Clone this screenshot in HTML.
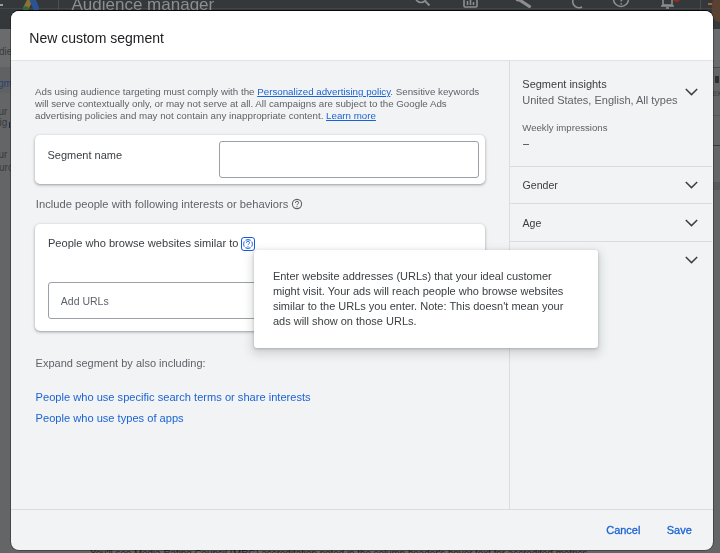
<!DOCTYPE html>
<html><head><meta charset="utf-8">
<style>
*{margin:0;padding:0;box-sizing:border-box}
html,body{width:720px;height:553px;overflow:hidden}
body{position:relative;background:#646566;font-family:"Liberation Sans",sans-serif;color:#3c4043}
.a{position:absolute;white-space:nowrap}
#dlg,#topbar{will-change:transform}
#topbar{left:0;top:0;width:720px;height:29px;background:#34383a}
#dlg{left:10px;top:10px;width:704px;height:541px}
#box{left:0.5px;top:0.5px;width:702px;height:539.5px;background:#f1f3f4;border-radius:8px;overflow:hidden;box-shadow:0 0 0 1px rgba(0,0,0,.3),0 -1px 0 rgba(0,0,0,.8)}
#cnt{left:0.5px;top:0;width:702px;height:541px}
#hdr{left:0;top:0;width:100%;height:50.5px;background:#fff;border-bottom:1px solid #e1e2e4}
.t11{font-size:11px;line-height:12px}
.t10{font-size:10px;line-height:12px}
.sec{color:#5f6368}
.card{background:#fff;border-radius:5px;box-shadow:0 1px 2px rgba(60,64,67,.3),0 1px 3px 1px rgba(60,64,67,.15)}
.inp{border:1px solid #9aa0a6;border-radius:3px;background:#fff}
.lnk{color:#1b63d5}
.med{-webkit-text-stroke:0.3px #1b63d5}
.ul{text-decoration:underline}
.div{background:#dadce0}
</style></head><body>
<div class="a" id="topbar"></div>
<div class="a" style="left:0;top:8px;width:720px;height:1px;background:#424649"></div>
<div class="a" style="left:0;top:4px;width:3px;height:1.5px;background:#9a9b9c"></div>
<svg class="a" style="left:20px;top:-8px" width="24" height="20" viewBox="0 0 24 20"><path d="M6 16 L12 4" stroke="#8a7134" stroke-width="5.5" stroke-linecap="round"/><path d="M10.5 3 L16 16" stroke="#2b5492" stroke-width="6" stroke-linecap="round"/><circle cx="5.8" cy="17" r="2.8" fill="#2a6a3c"/></svg>
<div class="a" style="left:57.5px;top:0;width:1px;height:10px;background:#4d5053"></div>
<div class="a" style="left:71.5px;top:-5px;font-size:17px;line-height:19px;color:#8c8e90">Audience manager</div>
<svg class="a" style="left:405px;top:0" width="300" height="10" viewBox="0 0 300 10" fill="none" stroke="#8c8e90" stroke-width="1.6">
 <circle cx="16" cy="-3" r="5.5"/><path d="M20 1 L24.5 5.5" stroke-width="1.8"/>
 <rect x="59" y="-6" width="13" height="13" rx="1"/><path d="M62.5 1 V5 M65.5 -2 V5 M68.5 2 V5"/>
 <path d="M113 -1 L124.5 6.5" stroke-width="3.2" stroke-linecap="round"/><circle cx="113" cy="-1" r="2.5" fill="#8c8e90" stroke="none"/>
 <path d="M171 -4 A6 6 0 0 0 177 7"/>
 <circle cx="216" cy="-1" r="7.5"/><path d="M218.5 -3 Q218.5 -1 216.2 0.3 V1.5" stroke-width="1.5"/><circle cx="216.2" cy="3.8" r="0.9" fill="#8c8e90" stroke="none"/>
 <path d="M258 -2 V5 H267 V-2 M256 6 H269"/><path d="M261 8 H264"/>
</svg>
<div class="a" style="left:673px;top:-1px;width:7px;height:3px;background:#8e2b22;border-radius:0 0 3px 3px"></div>
<div class="a" style="left:699.5px;top:0;width:1px;height:10px;background:#4d5053"></div>
<div class="a" style="left:708px;top:3px;width:4px;height:1.5px;background:#a06a30"></div>
<div class="a" style="left:712px;top:-4px;width:16px;height:26px;border-radius:8px;background:#5a4232"></div>
<!-- left strip -->
<div class="a" style="left:0;top:29px;width:12px;height:37.5px;background:#6a6b6c"></div>
<div class="a" style="left:-1px;top:45.6px;font-size:10px;line-height:12px;color:#3a3b3c">die</div>
<div class="a" style="left:0;top:66.5px;width:12px;height:26px;background:#5f6163"></div>
<div class="a" style="left:-2px;top:78.2px;font-size:10px;line-height:12px;color:#2d4270">gm</div>
<div class="a" style="left:-1.5px;top:106.3px;font-size:10px;line-height:12px;color:#3a3b3c">ur</div>
<div class="a" style="left:-0.5px;top:117px;font-size:10px;line-height:12px;color:#3a3b3c">ig</div>
<div class="a" style="left:9px;top:122px;width:1.2px;height:6px;background:#1e2a44"></div>
<div class="a" style="left:-1.5px;top:149.1px;font-size:10px;line-height:12px;color:#3a3b3c">ur</div>
<div class="a" style="left:-1px;top:161.5px;font-size:10px;line-height:12px;color:#3a3b3c">urc</div>
<!-- right strip -->
<div class="a" style="left:712px;top:29px;width:8px;height:38px;background:#6a6b6c"></div>
<div class="a" style="left:712px;top:67px;width:8px;height:1px;background:#4a4b4c"></div>
<div class="a" style="left:714.5px;top:76px;width:4px;height:7px;background:#2e2f30"></div>
<div class="a" style="left:712px;top:88px;font-size:9px;line-height:10px;color:#3e3f40">ex</div>
<div class="a" style="left:712px;top:115px;width:8px;height:1px;background:#565758"></div>
<div class="a" style="left:712px;top:145px;width:8px;height:1px;background:#3a3b3c"></div>
<div class="a" style="left:712px;top:182px;width:8px;height:8px;background:#58595a"></div>
<!-- bottom strip -->
<div class="a" style="left:90px;top:547.3px;font-size:9.8px;line-height:12px;color:#202122">You'll see Media Rating Council (MRC) accreditation noted in the column header's hover text for accredited metrics.</div>
<div class="a" id="dlg">
 <div class="a" id="box"><div class="a" id="hdr"></div></div>
 <div class="a" id="cnt">
  <div class="a" style="left:18.8px;top:20px;font-size:14px;line-height:16px;color:#202124">New custom segment</div>

  <div class="a t10 sec" style="left:24.5px;top:76px;line-height:11.8px;font-size:9.75px">Ads using audience targeting must comply with the <span class="lnk ul">Personalized advertising policy</span>. Sensitive keywords<br>will serve contextually only, or may not serve at all. All campaigns are subject to the Google Ads<br>advertising policies and may not contain any inappropriate content. <span class="lnk ul">Learn more</span></div>

  <div class="a card" style="left:24.2px;top:124.7px;width:450px;height:49.3px"></div>
  <div class="a t11" style="left:37px;top:138.5px">Segment name</div>
  <div class="a inp" style="left:208.9px;top:131.2px;width:260px;height:37.2px"></div>

  <div class="a t11 sec" style="left:25.3px;top:187.6px;font-size:11.2px">Include people with following interests or behaviors</div>

  <div class="a card" style="left:24.2px;top:214px;width:450px;height:107px"></div>
  <div class="a t11" style="left:37.4px;top:227.4px;font-size:11.1px">People who browse websites similar to</div>
  <div class="a inp" style="left:37px;top:272.2px;width:431px;height:36.7px"></div>
  <div class="a t11 sec" style="left:50.3px;top:284.8px;font-size:10.5px">Add URLs</div>

  <div class="a t11 sec" style="left:25.1px;top:347px">Expand segment by also including:</div>
  <div class="a t11 lnk" style="left:25.1px;top:380.8px;font-size:11.1px">People who use specific search terms or share interests</div>
  <div class="a t11 lnk" style="left:25.1px;top:402.2px;font-size:11.1px">People who use types of apps</div>

  <!-- right panel -->
  <div class="a div" style="left:498.6px;top:49.5px;width:1px;height:450px"></div>
  <div class="a t11" style="left:511.8px;top:68.3px">Segment insights</div>
  <div class="a t11 sec" style="left:511.8px;top:83.6px">United States, English, All types</div>
  <div class="a t10 sec" style="left:511.8px;top:112.4px;font-size:9.6px">Weekly impressions</div>
  <div class="a" style="left:512px;top:133.5px;width:6.5px;height:1px;background:#5f6368"></div>
  <div class="a div" style="left:499px;top:156px;width:202.5px;height:1px"></div>
  <div class="a t11" style="left:512px;top:169px;font-size:10.6px">Gender</div>
  <div class="a div" style="left:499px;top:193px;width:202.5px;height:1px"></div>
  <div class="a t11" style="left:512px;top:206.5px;font-size:10.6px">Age</div>
  <div class="a div" style="left:499px;top:230.5px;width:202.5px;height:1px"></div>


  <!-- chevrons -->
  <svg class="a" style="left:674px;top:78px" width="13" height="8" viewBox="0 0 13 8"><path d="M0.8 1 L6.5 6.6 L12.2 1" fill="none" stroke="#3c4043" stroke-width="1.5"/></svg>
  <svg class="a" style="left:674px;top:171px" width="13" height="8" viewBox="0 0 13 8"><path d="M0.8 1 L6.5 6.6 L12.2 1" fill="none" stroke="#3c4043" stroke-width="1.5"/></svg>
  <svg class="a" style="left:674px;top:208.5px" width="13" height="8" viewBox="0 0 13 8"><path d="M0.8 1 L6.5 6.6 L12.2 1" fill="none" stroke="#3c4043" stroke-width="1.5"/></svg>
  <svg class="a" style="left:674px;top:246.3px" width="13" height="8" viewBox="0 0 13 8"><path d="M0.8 1 L6.5 6.6 L12.2 1" fill="none" stroke="#3c4043" stroke-width="1.5"/></svg>

  <!-- help icon gray -->
  <svg class="a" style="left:280.5px;top:188px" width="12" height="12" viewBox="0 0 12 12"><circle cx="6" cy="6" r="4.6" fill="none" stroke="#5f6368" stroke-width="1.1"/><path d="M4.4 4.9 Q4.4 3.3 6 3.3 Q7.6 3.3 7.6 4.8 Q7.6 5.6 6.6 6.1 Q6 6.4 6 7.2" fill="none" stroke="#5f6368" stroke-width="1"/><circle cx="6" cy="8.6" r="0.6" fill="#5f6368"/></svg>

  <!-- help icon focused -->
  <div class="a" style="left:230.7px;top:227px;width:13.6px;height:13.7px;border:1.8px solid #1a5bd6;border-radius:3px"></div>
  <svg class="a" style="left:231.5px;top:227.8px" width="12" height="12" viewBox="0 0 12 12"><circle cx="6" cy="6" r="4.4" fill="none" stroke="#3f7be6" stroke-width="1.1" stroke-dasharray="5.5 1.25" stroke-dashoffset="2.75"/><path d="M4.4 4.9 Q4.4 3.3 6 3.3 Q7.6 3.3 7.6 4.8 Q7.6 5.6 6.6 6.1 Q6 6.4 6 7.2" fill="none" stroke="#3b78e7" stroke-width="1"/><circle cx="6" cy="8.6" r="0.6" fill="#3b78e7"/></svg>

  <!-- tooltip -->
  <div class="a" style="left:243.5px;top:239.6px;width:343.5px;height:98.2px;background:#fff;border-radius:3px;box-shadow:0 1px 3px rgba(60,64,67,.3),0 4px 8px 3px rgba(60,64,67,.15)"></div>
  <div class="a t11" style="left:262.4px;top:258.7px;line-height:15.27px;color:#3c4043">Enter website addresses (URLs) that your ideal customer<br>might visit. Your ads will reach people who browse websites<br>similar to the URLs you enter. Note: This doesn't mean your<br>ads will show on those URLs.</div>

  <!-- footer -->
  <div class="a div" style="left:0;top:499px;width:100%;height:1px"></div>
  <div class="a t11 lnk med" style="left:595.7px;top:513.5px">Cancel</div>
  <div class="a t11 lnk med" style="left:656.2px;top:513.5px">Save</div>
</div>
</div>
</body></html>
